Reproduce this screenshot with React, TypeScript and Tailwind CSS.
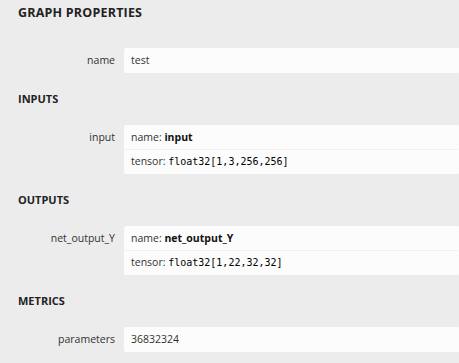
import React from "react";

function Header({ children, first }: { children: React.ReactNode; first?: boolean }) {
  return (
    <div
      className={
        first
          ? "pl-[18px] pt-[5px] text-[12.5px] tracking-[0.2px] font-bold leading-[15px] text-[#222] uppercase"
          : "pl-[18px] mt-[18px] text-[11px] font-bold leading-[15px] text-[#222] uppercase"
      }
    >
      {children}
    </div>
  );
}

function Row({ label, children, mt }: { label: string; children: React.ReactNode; mt: string }) {
  return (
    <div className={`flex ${mt}`}>
      <div className="w-[115px] shrink-0 text-right pt-[5px] leading-[15px] text-[#333]">{label}</div>
      <div className="ml-[9px] flex-1 bg-[#fcfcfc] rounded-l-[2px] border border-[#fcfcfc] flex flex-col">
        {children}
      </div>
    </div>
  );
}

function Line({ children, border }: { children: React.ReactNode; border?: boolean }) {
  return (
    <div
      className={
        border
          ? "px-[6px] py-[4px] leading-[15px] border-t border-[#f0f0f0]"
          : "px-[6px] py-[4px] leading-[15px]"
      }
    >
      {children}
    </div>
  );
}

function Code({ children }: { children: React.ReactNode }) {
  return <code className="font-['DejaVu_Sans_Mono',monospace] text-[10px] text-[#000]">{children}</code>;
}

export default function App() {
  return (
    <div className="w-[459px] h-[363px] overflow-hidden bg-[#ececec] font-['Open_Sans',sans-serif] text-[10.5px] text-[#333]">
      <Header first>Graph Properties</Header>
      <Row label="name" mt="mt-[28px]">
        <Line>test</Line>
      </Row>

      <Header>Inputs</Header>
      <Row label="input" mt="mt-[19px]">
        <Line>
          name: <b className="text-[#111]">input</b>
        </Line>
        <Line border>
          tensor: <Code>float32[1,3,256,256]</Code>
        </Line>
      </Row>

      <Header>Outputs</Header>
      <Row label="net_output_Y" mt="mt-[19px]">
        <Line>
          name: <b className="text-[#111]">net_output_Y</b>
        </Line>
        <Line border>
          tensor: <Code>float32[1,22,32,32]</Code>
        </Line>
      </Row>

      <Header>Metrics</Header>
      <Row label="parameters" mt="mt-[19px]">
        <Line>36832324</Line>
      </Row>
    </div>
  );
}
